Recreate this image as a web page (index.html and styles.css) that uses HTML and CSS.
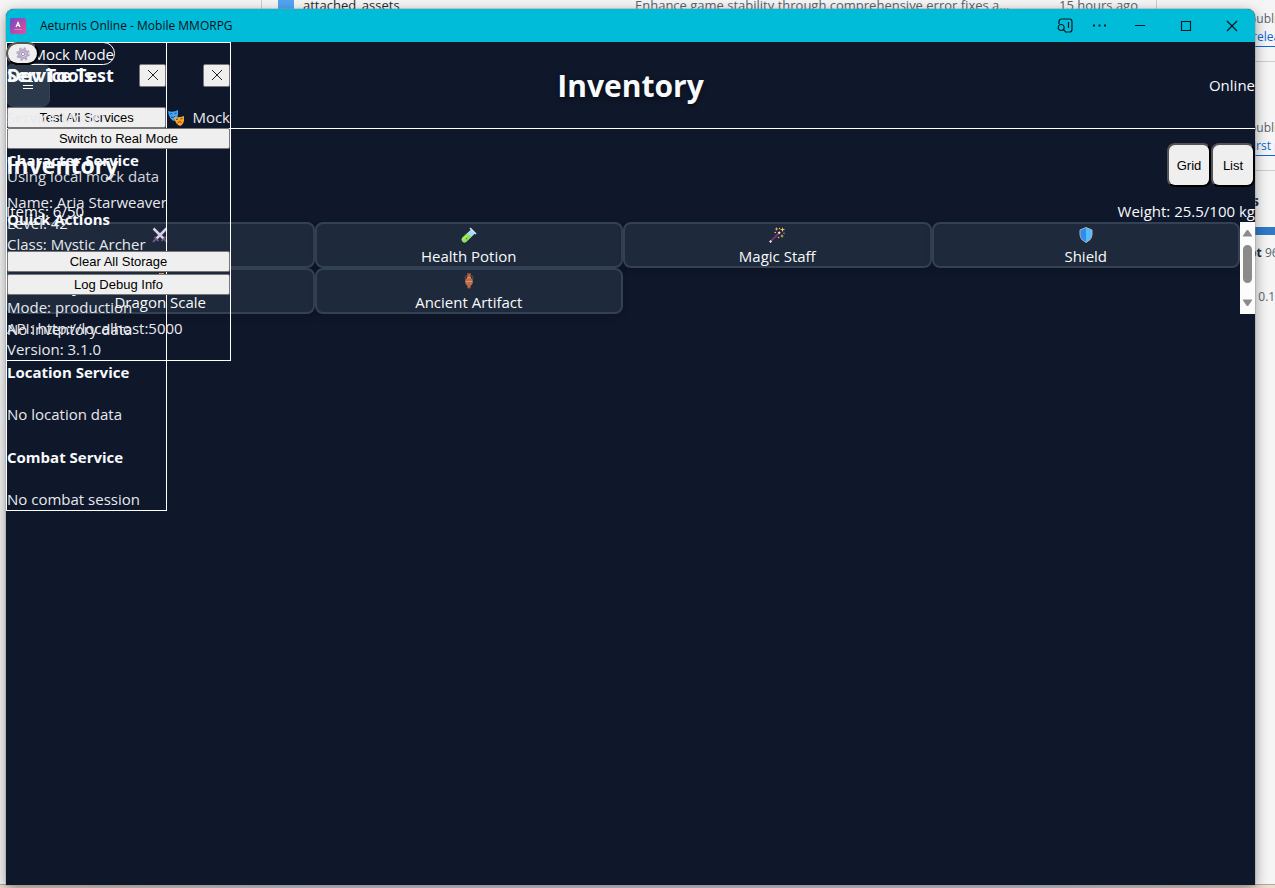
FILE: index.html
```html
<!DOCTYPE html>
<html lang="en">
<head>
<meta charset="utf-8">
<title>Aeturnis Online - Mobile MMORPG</title>
<link rel="stylesheet" href="styles.css">
</head>
<body>
<div class="desktop">
  <div class="repo">
    <div class="files">
      <svg class="folder" viewBox="0 0 16 16"><path d="M0 0h16v13H0z" fill="#54a3f2"/></svg>
      <span class="file-name">attached_assets</span>
      <span class="commit">Enhance game stability through comprehensive error fixes a...</span>
      <span class="age">15 hours ago</span>
    </div>
    <aside class="about">
      <section class="about-block releases">
        <p>published</p>
        <a href="#">&nbsp;release</a>
      </section>
      <section class="about-block packages">
        <p>published</p>
        <a href="#">first package</a>
      </section>
      <section class="languages">
        <h2>s</h2>
        <div class="lang-bar"></div>
        <p><b>pt</b> 96.2%</p>
        <p>&nbsp;&nbsp; 0.1%</p>
      </section>
    </aside>
  </div>

  <div class="window">
    <div class="titlebar">
      <svg class="app-icon" viewBox="0 0 16 16"><defs><linearGradient id="logo" x1="0" y1="0" x2="1" y2="1"><stop offset="0" stop-color="#6550c8"/><stop offset="1" stop-color="#ec4a98"/></linearGradient></defs><rect width="16" height="16" rx="2" fill="url(#logo)"/><path d="M6 9 8 4.500 10 9M6.800 7.500h2.400" fill="none" stroke="#fff" stroke-width="1.200"/><path d="M4 11.500h8" stroke="#e9b5e4" stroke-width=".5"/></svg>
      <span class="app-title">Aeturnis Online - Mobile MMORPG</span>
      <button class="sys" aria-label="Search in page"><svg viewBox="0 0 16 16"><path d="M2 6V3.500A2.500 2.500 0 0 1 4.500 1h8A2.500 2.500 0 0 1 15 3.500v8a2.500 2.500 0 0 1-2.500 2.500H9.500M11.500 4v6"/><circle cx="4.200" cy="9.500" r="3"/><path d="m6.400 11.700 3 3"/></svg></button>
      <button class="sys" aria-label="More"><svg viewBox="0 0 16 16"><path d="M1 7.500h2M6.500 7.500h2M12 7.500h2" stroke-width="2"/></svg></button>
      <button class="sys wide" aria-label="Minimize"><svg viewBox="0 0 16 16"><path d="M3 7.500h10"/></svg></button>
      <button class="sys wide" aria-label="Maximize"><svg viewBox="0 0 16 16"><path d="M3.500 3.500h9v9h-9z"/></svg></button>
      <button class="sys wide" aria-label="Close"><svg viewBox="0 0 16 16"><path d="m3 3 10 10M13 3 3 13"/></svg></button>
    </div>

    <div class="app">
      <header class="header">
        <button class="menu" aria-label="Menu"><svg viewBox="0 0 10 10"><path d="M0 1.500h10M0 5.500h10M0 8.500h10" stroke="#fff"/></svg></button>
        <h1>Inventory</h1>
        <span class="status">Online</span>
      </header>
      <main>
        <div class="toolbar">
          <h2>Inventory</h2>
          <div class="views"><button>Grid</button><button>List</button></div>
        </div>
        <div class="stats"><span>Items: 6/50</span><span>Weight: 25.5/100 kg</span></div>
        <div class="scroller">
          <div class="items">
            <div class="item"><svg viewBox="0 0 16 16"><path d="M1.500 1.500 12 12M14.500 1.500 4 12" stroke="#d9cfe6" stroke-width="2.500"/><path d="m9.500 14 4-4M2.500 10l4 4" stroke="#8062a2" stroke-width="1.500"/><path d="m12 12 3 3M4 12l-3 3" stroke="#765282" stroke-width="2"/></svg><span>Sword</span></div>
            <div class="item"><svg viewBox="0 0 16 16"><path d="m10 2.500 4 4L5 15q-2 1-3.500-.5T1 11z" fill="#a9d8fb"/><path d="M6 6.500 10.500 9.500 5 15q-2 1-3.500-.5T1 11z" fill="#91e34a"/><path d="m9 1 6 6" stroke="#dceeff" stroke-width="1.500"/><path d="M2 12.500 6 8.500" stroke="#d2f684"/><circle cx="5.500" cy="11.500" r=".8" fill="#359b40"/></svg><span>Health Potion</span></div>
            <div class="item"><svg viewBox="0 0 16 16"><path d="M1.500 14.500 10 6" stroke="#73326f" stroke-width="2"/><path d="m.8 15.200 1.500-1.500M9.500 6.500 11 5" stroke="#f0e6f3" stroke-width="2"/><g fill="#ffc45c"><path d="m13.500 0 .6 2 2 .6-2 .6-.6 2-.6-2-2-.6 2-.6zM7.500 0l.5 1.500 1.500.5L8 2.500 7.500 4 7 2.500 5.500 2 7 1.500zM13 7l.5 1.500 1.500.5-1.500.5L13 11l-.5-1.500L11 9l1.500-.5z"/><circle cx="6.200" cy="5.500" r=".8"/><circle cx="10.500" cy="1.500" r=".7"/><circle cx="9.500" cy="10.500" r=".8"/><circle cx="15" cy="6.200" r=".6"/></g></svg><span>Magic Staff</span></div>
            <div class="item"><svg viewBox="0 0 16 16"><path d="M8 .5 14 3v5q0 4.500-6 7.500Q2 12.500 2 8V3z" fill="#4dbfff" stroke="#b8aeb8"/><path d="M8 1v14Q2.500 12 2.500 8V3.300z" fill="#338be9"/></svg><span>Shield</span></div>
            <div class="item"><svg viewBox="0 0 16 16"><path d="M2 8q0-5 5-7l1 2 4-1-1 3 4 4-3 3-4-3-3 6q-3-2-3-7" fill="#5aa860"/><path d="m6 2 2-2 2 3M9 1l3-1" stroke="#eeb64c" fill="none"/></svg><span>Dragon Scale</span></div>
            <div class="item"><svg viewBox="0 0 16 16"><path d="M6.500 3Q4 2 4 4.500T6 7M9.500 3Q12 2 12 4.500T10 7" fill="none" stroke="#714c43"/><path d="M6 .5h4L9.500 2v2.500q2.500 1.500 2.500 4 0 3-2.500 4.500v2h-3v-2Q4 11.500 4 8.500q0-2.500 2.500-4V2z" fill="#bd6d4e"/><path d="M6 4.500h4M5 8.500h6" stroke="#de985f"/><path d="M6 1h4M6.500 15h3" stroke="#8d4938"/></svg><span>Ancient Artifact</span></div>
          </div>
          <div class="track"><svg viewBox="0 0 15 92" fill="#8b8b8b"><path d="M7.500 8q.6 0 1 .6l3.500 5q.5 1-.5 1h-8q-1 0-.5-1l3.500-5q.4-.6 1-.6M3 27.500a4.500 4.500 0 0 1 9 0v29a4.500 4.500 0 0 1-9 0zM7.500 84q.6 0 1-.6l3.500-5q.5-1-.5-1h-8q-1 0-.5 1l3.500 5q.4.600 1 .6"/></svg></div>
        </div>
      </main>

      <section class="panel service">
        <div class="panel-head"><h3>Service Test</h3><button class="plain close" aria-label="Close service test"><svg viewBox="0 0 10 10"><path d="m0 0 10 10M10 0 0 10" stroke="#222"/></svg></button></div>
        <button class="plain">Test All Services</button>
        <h4>Character Service</h4>
        <p>Name: Aria Starweaver</p><p>Level: 42</p><p>Class: Mystic Archer</p>
        <h4>Inventory Service</h4>
        <p>No inventory data</p>
        <h4>Location Service</h4>
        <p>No location data</p>
        <h4>Combat Service</h4>
        <p>No combat session</p>
      </section>

      <section class="panel dev">
        <div class="panel-head"><h3>Dev Tools</h3><button class="plain close" aria-label="Close dev tools"><svg viewBox="0 0 10 10"><path d="m0 0 10 10M10 0 0 10" stroke="#222"/></svg></button></div>
        <div class="mode"><span>Service Mode:</span><span class="mode-value"><svg viewBox="0 0 16 16"><path d="M0 1q5 2 10-1 1 9-4 11Q1 9 0 1" fill="#42a5f5"/><path d="m2 4 2-.5M6.500 3.500l2-.5M3 7q3 1.500 4-1" stroke="#174f91" fill="none"/><path d="M6 7q5 1 10-1 1 8-4 10-5-2-6-9" fill="#f5a52e"/><path d="m8 9.500 2-.5M12.500 9l2-.5M9.500 13q2-3 4-.5" stroke="#75401f" fill="none"/></svg>Mock</span></div>
        <button class="plain">Switch to Real Mode</button>
        <p class="hint">Using local mock data</p>
        <h4>Quick Actions</h4>
        <div class="actions"><button class="plain">Clear All Storage</button><button class="plain">Log Debug Info</button></div>
        <p>Mode: production</p><p>API: http://localhost:5000</p><p>Version: 3.1.0</p>
      </section>

      <div class="badge">Mock Mode</div>
      <button class="gear" aria-label="Developer settings"><svg viewBox="0 0 16 16" fill="none"><circle cx="8" cy="8" r="6.500" stroke="#b6aac8" stroke-width="2.500" stroke-dasharray="2.600 2.500"/><circle cx="8" cy="8" r="4.500" stroke="#b6aac8" stroke-width="3"/><circle cx="8" cy="8" r="2" stroke="#8c7ca8"/></svg></button>
    </div>
  </div>
</div>
</body>
</html>
```
FILE: styles.css
```css
* { box-sizing: border-box; }
body, h1, h2, h3, h4, p { margin: 0; }
body { font: 15px/21px "Open Sans", "Noto Sans", sans-serif; }
button { padding: 0; font: 13px "Liberation Sans", sans-serif; color: #000; }
svg { display: block; }

.desktop { position: relative; height: 100vh; overflow: hidden; background: linear-gradient(90deg, #f3dacb, #d5d9e6 25%, #d5d9e6 80%, #f3dacb); }

/* Browser page behind the application window */
.repo { height: calc(100% - 3px); display: grid; grid-template-columns: 1fr 26px; background: #f5f5f5; color: #59636e; font-size: 13px; line-height: 19px; border-bottom: 1px solid #aaa; }
.files { display: grid; grid-template-columns: 16px 323px 1fr 97px; align-items: start; column-gap: 9px; margin-left: 261px; padding-left: 16px; margin-right: 92px; height: 9px; border-left: 1px solid #ccc; border-right: 1px solid #ccc; line-height: 10px; white-space: nowrap; }
.folder { width: 16px; height: 16px; }
.file-name { color: #24292f; }
.about { overflow: hidden; white-space: nowrap; font-size: 12px; line-height: 18px; }
.about a { color: #0969da; text-decoration: underline; text-underline-offset: 5px; }
.about-block { border-bottom: 1px solid #ccc; }
.releases { height: 62px; padding-top: 10px; }
.packages { height: 109px; padding-top: 57px; }
.languages h2 { margin-top: 20px; padding-left: 3px; font-size: 14px; line-height: 20px; color: #24292f; }
.lang-bar { height: 8px; margin: 16px 0 8px; background: #3178c6; }
.languages p { height: 44px; line-height: 20px; }
.languages b { color: #24292f; }

/* Application window */
.window { position: absolute; top: 9px; right: 20px; bottom: 3px; left: 6px; display: flex; flex-direction: column; overflow: hidden; border-radius: 8px 8px 0 0; background: #0f172a; box-shadow: 0 0 0 1px #9996, 0 4px 14px #0006; }
.titlebar { display: flex; align-items: center; height: 33px; flex: none; padding-left: 4px; background: #00bcd8; color: #081018; }
.app-icon { width: 16px; height: 16px; }
.app-title { flex: 1; margin-left: 14px; font-size: 12px; }
.sys { width: 35px; height: 33px; border: 0; background: none; display: grid; place-items: center; }
.sys.wide { width: 46px; }
.sys svg { width: 16px; height: 16px; fill: none; stroke: #061820; stroke-width: 1.2; }

.app { position: relative; flex: 1; color: #f8fafc; }
.header { display: grid; grid-template-columns: 1fr auto 1fr; align-items: center; height: 87px; border-bottom: 1px solid #fff; }
.menu { width: 44px; height: 44px; border: 1px solid #334155; border-radius: 8px; background: #2c394b; display: grid; place-items: center; }
.menu svg { width: 10px; height: 10px; }
h1 { font-size: 30px; line-height: 43px; text-shadow: 0 2px 4px #0008; }
.status { justify-self: end; }
.toolbar { display: flex; align-items: center; justify-content: space-between; height: 72px; }
h2 { font-size: 23px; line-height: 32px; }
.views { display: flex; }
.views button { width: 44px; height: 44px; border: 2px outset #000; border-radius: 8px; background: #efefef; }
.stats { display: flex; justify-content: space-between; height: 21px; }
.scroller { display: flex; height: 92px; }
.items { flex: 1; display: grid; grid-template-columns: repeat(4, 1fr); align-content: start; }
.item { display: flex; flex-direction: column; align-items: center; height: 46px; border: 2px solid #334155; border-radius: 8px; background: #1e293b; box-shadow: 0 4px 6px #0002; }
.item svg { flex: none; width: 16px; height: 16px; margin: 3px 0; }
.track { width: 15px; background: #fcfcfc; }
.track svg { width: 15px; height: 92px; }

/* Floating tools, stacked in the same corner */
.panel { position: absolute; top: 0; left: 0; display: flex; flex-direction: column; border: 1px solid #fff; white-space: nowrap; color: #e7e9ed; }
.service { width: 161px; }
.dev { width: 225px; }
.panel-head { display: flex; align-items: center; justify-content: space-between; height: 64px; }
h3 { font-size: 18px; line-height: 26px; color: #f8fafc; }
h4 { margin: 22px 0 21px; font-size: 15px; line-height: 21px; color: #f8fafc; }
.plain { height: 21px; border: 1px solid #767676; border-radius: 2px; background: #efefef; }
.close { width: 27px; height: 23px; display: grid; place-items: center; }
.close svg { width: 10px; height: 10px; }
.mode, .mode-value { display: flex; align-items: center; justify-content: space-between; }
.mode-value { gap: 8px; }
.mode-value svg { width: 16px; height: 16px; }
.hint { margin-top: 17px; color: #d4d7dd; }
.actions { display: grid; gap: 2px; margin-bottom: 2px; }
.badge { position: absolute; top: 0; left: 0; width: 109px; height: 23px; border: 1px solid #fff; border-radius: 12px; line-height: 23px; text-align: right; }
.gear { position: absolute; top: 0; left: 0; width: 33px; height: 23px; border: 2px outset #000; border-radius: 12px; background: #efefef; display: grid; place-items: center; }
.gear svg { width: 14px; height: 14px; }
```
